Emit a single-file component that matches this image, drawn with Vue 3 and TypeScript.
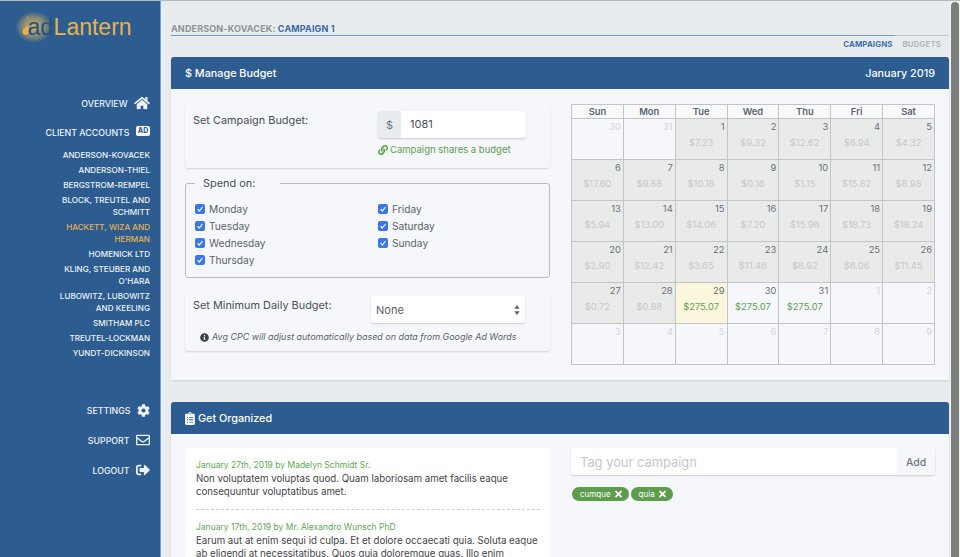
<script setup lang="ts">
const accounts = [
  { name: 'ANDERSON-KOVACEK' },
  { name: 'ANDERSON-THIEL' },
  { name: 'BERGSTROM-REMPEL' },
  { name: 'BLOCK, TREUTEL AND SCHMITT' },
  { name: 'HACKETT, WIZA AND HERMAN', active: true },
  { name: 'HOMENICK LTD' },
  { name: 'KLING, STEUBER AND O\'HARA' },
  { name: 'LUBOWITZ, LUBOWITZ AND KEELING' },
  { name: 'SMITHAM PLC' },
  { name: 'TREUTEL-LOCKMAN' },
  { name: 'YUNDT-DICKINSON' },
]
const weekdays = ['Sun', 'Mon', 'Tue', 'Wed', 'Thu', 'Fri', 'Sat']
interface Day { d: number; amt?: string; kind: 'off' | 'past' | 'today' | 'future' }
const past = (d: number, amt: string): Day => ({ d, amt: '$' + amt, kind: 'past' })
const off = (d: number): Day => ({ d, kind: 'off' })
const fut = (d: number, kind: 'today' | 'future'): Day => ({ d, amt: '$275.07', kind })
const weeks: Day[][] = [
  [off(30), off(31), past(1, '7.23'), past(2, '9.32'), past(3, '12.62'), past(4, '6.94'), past(5, '4.32')],
  [past(6, '17.60'), past(7, '9.88'), past(8, '10.18'), past(9, '0.16'), past(10, '1.15'), past(11, '15.82'), past(12, '8.98')],
  [past(13, '5.94'), past(14, '13.00'), past(15, '14.06'), past(16, '7.20'), past(17, '15.96'), past(18, '18.73'), past(19, '18.24')],
  [past(20, '2.90'), past(21, '12.42'), past(22, '3.65'), past(23, '11.46'), past(24, '8.92'), past(25, '6.06'), past(26, '11.45')],
  [past(27, '0.72'), past(28, '0.88'), fut(29, 'today'), fut(30, 'future'), fut(31, 'future'), off(1), off(2)],
  [off(3), off(4), off(5), off(6), off(7), off(8), off(9)],
]
const daysA = ['Monday', 'Tuesday', 'Wednesday', 'Thursday']
const daysB = ['Friday', 'Saturday', 'Sunday']
const tags = ['cumque', 'quia']
const timesPath = 'M242.72 256l100.07-100.07c12.28-12.28 12.28-32.19 0-44.48l-22.24-22.24c-12.28-12.28-32.19-12.28-44.48 0L176 189.28 75.93 89.21c-12.28-12.28-32.19-12.28-44.48 0L9.21 111.45c-12.28 12.28-12.28 32.19 0 44.48L109.28 256 9.21 356.07c-12.28 12.28-12.28 32.19 0 44.48l22.24 22.24c12.28 12.28 32.2 12.28 44.48 0L176 322.72l100.07 100.07c12.28 12.28 32.2 12.28 44.48 0l22.24-22.24c12.28-12.28 12.28-32.19 0-44.48L242.72 256z'
</script>

<template>
  <div class="app">
    <aside class="sidebar">
      <div class="logo">
        <span class="glow"></span>
        <svg class="flame" viewBox="0 0 8 20" width="8" height="20"><path d="M5.2 0h1v3h-1z" fill="#e3ac48" opacity=".7"/><path d="M5 9c.6 2 2 3 2 5.6C7 17.500 5.400 19 3.800 19 2 19 .6 17.600.6 15.400.6 12.800 3.800 11.500 5 9z" fill="#eeb045"/></svg>
        <span class="logo-ad">ad</span><span class="logo-lantern">Lantern</span>
      </div>
      <a class="nav overview">OVERVIEW
        <svg viewBox="0 0 576 512" width="16" height="14"><path fill="currentColor" d="M280.37 148.26L96 300.11V464a16 16 0 0 0 16 16l112.06-.29a16 16 0 0 0 15.92-16V368a16 16 0 0 1 16-16h64a16 16 0 0 1 16 16v95.64a16 16 0 0 0 16 16.05L464 480a16 16 0 0 0 16-16V300L295.67 148.26a12.19 12.19 0 0 0-15.3 0zM571.6 251.47L488 182.56V44.05a12 12 0 0 0-12-12h-56a12 12 0 0 0-12 12v72.61L318.47 43a48 48 0 0 0-61 0L4.34 251.47a12 12 0 0 0-1.6 16.9l25.5 31A12 12 0 0 0 45.15 301l235.22-193.74a12.19 12.19 0 0 1 15.3 0L530.9 301a12 12 0 0 0 16.9-1.6l25.5-31a12 12 0 0 0-1.7-16.93z"/></svg>
      </a>
      <a class="nav clients">CLIENT ACCOUNTS <span class="ad-badge">AD</span></a>
      <ul class="accounts">
        <li v-for="a in accounts" :key="a.name" :class="{ active: a.active }">{{ a.name }}</li>
      </ul>
      <a class="nav settings">SETTINGS
        <svg viewBox="0 0 512 512" width="13" height="13"><path fill="currentColor" d="M487.4 315.7l-42.6-24.6c4.3-23.2 4.3-47 0-70.2l42.6-24.6c4.9-2.8 7.1-8.6 5.5-14-11.1-35.6-30-67.8-54.7-94.6-3.8-4.1-10-5.1-14.8-2.3L380.8 110c-17.9-15.4-38.5-27.3-60.8-35.1V25.8c0-5.6-3.9-10.5-9.4-11.7-36.7-8.2-74.3-7.8-109.2 0-5.5 1.2-9.4 6.1-9.4 11.7V75c-22.2 7.9-42.8 19.8-60.8 35.1L88.7 85.5c-4.9-2.8-11-1.9-14.8 2.3-24.7 26.7-43.6 58.9-54.7 94.6-1.7 5.4.6 11.2 5.5 14L67.3 221c-4.3 23.2-4.3 47 0 70.2l-42.6 24.6c-4.9 2.8-7.1 8.6-5.5 14 11.1 35.6 30 67.8 54.7 94.6 3.8 4.1 10 5.1 14.8 2.3l42.6-24.6c17.9 15.4 38.5 27.3 60.8 35.1v49.2c0 5.6 3.9 10.5 9.4 11.7 36.7 8.2 74.3 7.8 109.2 0 5.5-1.2 9.4-6.1 9.4-11.7v-49.2c22.2-7.9 42.8-19.8 60.8-35.1l42.6 24.6c4.9 2.8 11 1.9 14.8-2.3 24.7-26.7 43.6-58.9 54.7-94.6 1.5-5.5-.7-11.3-5.6-14.1zM256 336c-44.1 0-80-35.9-80-80s35.9-80 80-80 80 35.9 80 80-35.9 80-80 80z"/></svg>
      </a>
      <a class="nav support">SUPPORT
        <svg viewBox="0 0 512 512" width="14" height="14"><path fill="currentColor" d="M464 64H48C21.49 64 0 85.49 0 112v288c0 26.51 21.49 48 48 48h416c26.51 0 48-21.49 48-48V112c0-26.51-21.49-48-48-48zm0 48v40.805c-22.422 18.259-58.168 46.651-134.587 106.49-16.841 13.247-50.201 45.072-73.413 44.701-23.208.375-56.579-31.459-73.413-44.701C106.18 199.465 70.425 171.067 48 152.805V112h416zM48 400V214.398c22.914 18.251 55.409 43.862 104.938 82.646 21.857 17.205 60.134 55.186 103.062 54.955 42.717.231 80.509-37.199 103.053-54.947 49.528-38.783 82.032-64.401 104.947-82.653V400H48z"/></svg>
      </a>
      <a class="nav logout">LOGOUT
        <svg viewBox="0 0 512 512" width="14" height="14"><path fill="currentColor" d="M497 273L329 441c-15 15-41 4.500-41-17v-96H152c-13.300 0-24-10.700-24-24v-96c0-13.300 10.700-24 24-24h136V88c0-21.400 25.900-32 41-17l168 168c9.300 9.400 9.300 24.600 0 34zM192 436v-40c0-6.600-5.400-12-12-12H96c-17.700 0-32-14.300-32-32V160c0-17.700 14.300-32 32-32h84c6.600 0 12-5.400 12-12V76c0-6.600-5.400-12-12-12H96c-53 0-96 43-96 96v192c0 53 43 96 96 96h84c6.600 0 12-5.400 12-12z"/></svg>
      </a>
    </aside>

    <main class="main">
      <div class="crumbs"><span class="crumb-client">ANDERSON-KOVACEK:</span> <span class="crumb-camp">CAMPAIGN 1</span></div>
      <div class="rule"><span class="rule-fill"></span></div>
      <div class="tabs"><span class="tab on">CAMPAIGNS</span><span class="tab">BUDGETS</span></div>

      <section class="card budget-card">
        <header class="card-head"><span>$ Manage Budget</span><span>January 2019</span></header>
        <div class="card-body budget-body">
          <div class="col-left">
            <div class="panel panel-budget">
              <div class="label">Set Campaign Budget:</div>
              <div class="budget-field">
                <div class="input-group">
                  <span class="addon">$</span>
                  <span class="input-val">1081</span>
                </div>
                <div class="shares">
                  <svg viewBox="0 0 512 512" width="10" height="10"><path fill="currentColor" d="M326.612 185.391c59.747 59.809 58.927 155.698.36 214.59-.11.12-.24.25-.36.37l-67.2 67.2c-59.27 59.27-155.699 59.262-214.96 0-59.27-59.26-59.27-155.7 0-214.96l37.106-37.106c9.84-9.84 26.786-3.3 27.294 10.606.648 17.722 3.826 35.527 9.69 52.721 1.986 5.822.567 12.262-3.783 16.612l-13.087 13.087c-28.026 28.026-28.905 73.66-1.155 101.96 28.024 28.579 74.086 28.749 102.325.51l67.2-67.19c28.191-28.191 28.073-73.757 0-101.83-3.701-3.694-7.429-6.564-10.341-8.569a16.037 16.037 0 0 1-6.947-12.606c-.396-10.567 3.348-21.456 11.698-29.806l21.054-21.055c5.521-5.521 14.182-6.199 20.584-1.731a152.482 152.482 0 0 1 20.522 17.197zM467.547 44.449c-59.261-59.262-155.69-59.27-214.96 0l-67.2 67.2c-.12.12-.25.25-.36.37-58.566 58.892-59.387 154.781.36 214.59a152.454 152.454 0 0 0 20.521 17.196c6.402 4.468 15.064 3.789 20.584-1.731l21.054-21.055c8.35-8.35 12.094-19.239 11.698-29.806a16.037 16.037 0 0 0-6.947-12.606c-2.912-2.005-6.64-4.875-10.341-8.569-28.073-28.073-28.191-73.639 0-101.83l67.2-67.19c28.239-28.239 74.3-28.069 102.325.51 27.75 28.3 26.872 73.934-1.155 101.96l-13.087 13.087c-4.35 4.35-5.769 10.79-3.783 16.612 5.864 17.194 9.042 34.999 9.69 52.721.509 13.906 17.454 20.446 27.294 10.606l37.106-37.106c59.271-59.259 59.271-155.699.001-214.959z"/></svg>
                  Campaign shares a budget
                </div>
              </div>
            </div>

            <fieldset class="spend">
              <legend>Spend on:</legend>
              <div class="spend-cols">
                <div class="spend-col">
                  <div class="check" v-for="d in daysA" :key="d"><span class="box"><svg viewBox="0 0 10 10" width="10" height="10"><path d="M2.600 5.200l1.700 1.800 3.200-4" fill="none" stroke="#fff" stroke-width="1.200"/></svg></span>{{ d }}</div>
                </div>
                <div class="spend-col wide">
                  <div class="check" v-for="d in daysB" :key="d"><span class="box"><svg viewBox="0 0 10 10" width="10" height="10"><path d="M2.600 5.200l1.700 1.800 3.200-4" fill="none" stroke="#fff" stroke-width="1.200"/></svg></span>{{ d }}</div>
                </div>
              </div>
            </fieldset>

            <div class="panel panel-min">
              <div class="min-row">
                <div class="label">Set Minimum Daily Budget:</div>
                <div class="select">None
                  <svg viewBox="0 0 6 10" width="6" height="10"><path d="M3 0l2.600 3.800H.4zM3 10L.4 6.200h5.200z" fill="#55606c"/></svg>
                </div>
              </div>
              <div class="note">
                <svg viewBox="0 0 512 512" width="9" height="9"><path fill="#3b4149" d="M256 8C119.043 8 8 119.083 8 256c0 136.997 111.043 248 248 248s248-111.003 248-248C504 119.083 392.957 8 256 8zm0 110c23.196 0 42 18.804 42 42s-18.804 42-42 42-42-18.804-42-42 18.804-42 42-42zm56 254c0 6.627-5.373 12-12 12h-88c-6.627 0-12-5.373-12-12v-24c0-6.627 5.373-12 12-12h12v-64h-12c-6.627 0-12-5.373-12-12v-24c0-6.627 5.373-12 12-12h64c6.627 0 12 5.373 12 12v100h12c6.627 0 12 5.373 12 12v24z"/></svg>
                <em>Avg CPC will adjust automatically based on data from Google Ad Words</em>
              </div>
            </div>
          </div>

          <table class="cal">
            <thead><tr><th v-for="w in weekdays" :key="w">{{ w }}</th></tr></thead>
            <tbody>
              <tr v-for="(week, i) in weeks" :key="i">
                <td v-for="day in week" :key="day.d" :class="day.kind">
                  <div class="num">{{ day.d }}</div>
                  <div class="amt" v-if="day.amt">{{ day.amt }}</div>
                </td>
              </tr>
            </tbody>
          </table>
        </div>
      </section>

      <section class="card org-card">
        <header class="card-head">
          <span class="with-icon">
            <svg viewBox="0 0 384 512" width="10" height="13"><path fill="currentColor" d="M336 64h-80c0-35.300-28.700-64-64-64s-64 28.700-64 64H48C21.500 64 0 85.500 0 112v352c0 26.500 21.500 48 48 48h288c26.500 0 48-21.500 48-48V112c0-26.500-21.500-48-48-48zM96 424c-13.300 0-24-10.700-24-24s10.700-24 24-24 24 10.700 24 24-10.700 24-24 24zm0-96c-13.300 0-24-10.700-24-24s10.700-24 24-24 24 10.700 24 24-10.700 24-24 24zm0-96c-13.300 0-24-10.700-24-24s10.700-24 24-24 24 10.700 24 24-10.700 24-24 24zm96-192c13.300 0 24 10.700 24 24s-10.700 24-24 24-24-10.700-24-24 10.700-24 24-24zm128 368c0 4.400-3.600 8-8 8H168c-4.400 0-8-3.600-8-8v-16c0-4.400 3.600-8 8-8h144c4.400 0 8 3.600 8 8v16zm0-96c0 4.400-3.600 8-8 8H168c-4.400 0-8-3.600-8-8v-16c0-4.400 3.600-8 8-8h144c4.400 0 8 3.600 8 8v16zm0-96c0 4.400-3.600 8-8 8H168c-4.400 0-8-3.600-8-8v-16c0-4.400 3.600-8 8-8h144c4.400 0 8 3.600 8 8v16z"/></svg>
            Get Organized
          </span>
        </header>
        <div class="card-body org-body">
          <div class="notes">
            <div class="note-item">
              <div class="note-date">January 27th, 2019 by Madelyn Schmidt Sr.</div>
              <p>Non voluptatem voluptas quod. Quam laboriosam amet facilis eaque consequuntur voluptatibus amet.</p>
            </div>
            <div class="note-item second">
              <div class="note-date">January 17th, 2019 by Mr. Alexandro Wunsch PhD</div>
              <p>Earum aut at enim sequi id culpa. Et et dolore occaecati quia. Soluta eaque ab eligendi at necessitatibus. Quos quia doloremque quas. Illo enim</p>
            </div>
          </div>
          <div class="tagging">
            <div class="tag-input"><span class="ph">Tag your campaign</span><span class="add">Add</span></div>
            <div class="tags">
              <span class="tag" v-for="t in tags" :key="t">{{ t }}
                <svg viewBox="0 0 352 512" width="7" height="10"><path fill="#fff" :d="timesPath"/></svg>
              </span>
            </div>
          </div>
        </div>
      </section>
    </main>

    <div class="scrollbar"><div class="thumb"></div></div>
  </div>
</template>

<style>
html, body { margin: 0; height: 557px; overflow: hidden; }
</style>

<style scoped>
.app {
  display: flex;
  height: 557px;
  box-sizing: border-box;
  border-top: 1px solid #b9b9bb;
  overflow: hidden;
  font-family: Inter, "Liberation Sans", sans-serif;
  background: #e9ecef;
  color: #495057;
}
.sidebar {
  width: 160px;
  flex: none;
  background: #2c5c90;
  color: #eef2f7;
  display: flex;
  flex-direction: column;
  align-items: flex-end;
  padding-right: 10px;
  box-sizing: border-box;
  position: relative;
}
.logo {
  position: absolute;
  left: 22px;
  top: 11px;
  height: 30px;
  display: flex;
  align-items: center;
  font-family: "Liberation Sans", sans-serif;
  font-size: 23px;
}
.glow {
  position: absolute;
  left: -7px;
  top: -1px;
  width: 42px;
  height: 32px;
  background: radial-gradient(ellipse closest-side at 45% 50%, rgba(240, 190, 90, .85) 0%, rgba(240, 190, 90, .5) 55%, rgba(240, 190, 90, 0) 100%);
}
.flame { position: relative; margin-right: -2.5px; margin-top: -2px; }
.logo-ad { position: relative; color: #24527f; }
.logo-lantern { position: relative; color: #e8b24c; margin-left: .5px; }
.nav {
  display: flex;
  align-items: center;
  gap: 6.5px;
  font-size: 8.8px;
  font-weight: 500;
  line-height: 14px;
}
.nav svg, .ad-badge { transform: translateY(-1px); }
.overview { margin-top: 96px; }
.clients { margin-top: 15px; }
.settings { margin-top: 45px; }
.support { margin-top: 16px; }
.logout { margin-top: 16px; }
.ad-badge {
  width: 14px;
  height: 10px;
  background: #fff;
  border-radius: 2px;
  color: #2c5c90;
  font-size: 7px;
  font-weight: 800;
  line-height: 10px;
  text-align: center;
  margin-bottom: 2px;
}
.accounts {
  list-style: none;
  margin: 9px 0 0;
  padding: 0;
  width: 100px;
  text-align: right;
  display: flex;
  flex-direction: column;
  gap: 3px;
  font-size: 8.1px;
  font-weight: 500;
  line-height: 12px;
}
.accounts .active { color: #e4b254; }
.main {
  flex: 1;
  min-width: 0;
  box-sizing: border-box;
  border-left: 1px solid #7f9fc6;
  padding: 21px 1px 0 10px;
}
.crumbs {
  font-size: 9px;
  font-weight: 700;
  line-height: 13px;
  height: 13px;
  letter-spacing: .15px;
}
.crumb-client { color: #8d9298; }
.crumb-camp { color: #3a6ba3; }
.rule {
  height: 1px;
  background: #c3c8cf;
}
.rule-fill { display: block; width: 724px; height: 1px; background: #7b9cc4; }
.tabs {
  display: flex;
  justify-content: flex-end;
  gap: 10px;
  padding: 3px 8px 0 0;
  height: 16px;
  box-sizing: border-box;
  font-size: 7.8px;
  font-weight: 700;
  line-height: 10px;
  color: #b1b4b9;
  letter-spacing: .15px;
  margin-bottom: 5px;
}
.tab.on { color: #3f6fa6; }
.card { box-shadow: 0 1px 2px rgba(0, 0, 0, .12); border-radius: 3px; }
.card-head {
  height: 32px;
  background: #2c5c90;
  color: #fff;
  border-radius: 3px 3px 0 0;
  display: flex;
  align-items: center;
  justify-content: space-between;
  padding: 0 14px;
  font-size: 10.8px;
  font-weight: 500;
}
.with-icon { display: inline-flex; align-items: center; gap: 3px; }
.card-body { background: #f5f7fa; }
.budget-body {
  height: 291px;
  box-sizing: border-box;
  padding: 15px 14px 0;
  display: flex;
  justify-content: space-between;
}
.col-left { width: 365px; }
.panel {
  border-radius: 3px;
  box-shadow: 0 1px 2px rgba(0, 0, 0, .14);
  background: #f5f7fa;
}
.panel-budget {
  height: 64px;
  box-sizing: border-box;
  padding: 7px 8px 0;
  display: flex;
  justify-content: space-between;
}
.label { font-size: 10.9px; line-height: 16px; padding-top: 1px; color: #495057; }
.budget-field { width: 148px; margin-right: 16px; }
.input-group {
  height: 27px;
  display: flex;
  background: #fff;
  border-radius: 3px;
  box-shadow: 0 1px 2px rgba(0, 0, 0, .18);
  overflow: hidden;
  align-items: stretch;
  font-size: 11px;
}
.addon {
  width: 23px;
  background: #e9ecef;
  display: flex;
  align-items: center;
  justify-content: center;
  color: #6c757d;
}
.input-val { padding-left: 9px; line-height: 27px; color: #495057; }
.shares {
  margin-top: 6px;
  display: flex;
  align-items: center;
  gap: 2px;
  font-size: 9.5px;
  line-height: 12px;
  color: #58a14a;
  white-space: nowrap;
}
.spend {
  margin: 8px 0 0;
  padding: 0;
  height: 102px;
  min-width: 0;
  box-sizing: border-box;
  border: 1px solid #b8bcc2;
  border-radius: 3px;
  position: relative;
}
.spend legend {
  margin-left: 9px;
  padding: 0 25px 0 8px;
  font-size: 10.9px;
  line-height: 14px;
  color: #495057;
  height: 14px;
}
.spend-cols { display: flex; padding: 10px 0 0 9px; }
.spend-col { width: 183px; flex: none; }
.spend-col.wide { width: auto; flex: 1; }
.check {
  display: flex;
  align-items: center;
  gap: 4px;
  height: 17px;
  font-size: 10.2px;
  color: #5b636b;
}
.box {
  width: 10px;
  height: 10px;
  background: #3a78e8;
  border-radius: 2px;
  display: flex;
}
.panel-min {
  margin-top: 14px;
  height: 59px;
  box-sizing: border-box;
  padding: 4px 8px 0;
}
.min-row { display: flex; justify-content: space-between; }
.select {
  width: 154px;
  height: 27px;
  background: #fff;
  border-radius: 3px;
  box-shadow: 0 1px 2px rgba(0, 0, 0, .18);
  margin-right: 17px;
  box-sizing: border-box;
  padding: 0 5px;
  display: flex;
  align-items: center;
  justify-content: space-between;
  font-size: 11px;
  color: #5b636b;
}
.note {
  margin-top: 8px;
  padding-left: 7px;
  display: flex;
  align-items: center;
  gap: 3px;
  font-size: 8.95px;
  line-height: 12px;
  color: #5b636b;
  white-space: nowrap;
}
.cal {
  width: 364px;
  height: 260px;
  table-layout: fixed;
  border-collapse: collapse;
  font-size: 9.4px;
  align-self: flex-start;
}
.cal th {
  height: 13px;
  padding: 0;
  border: 1px solid #c3c4c6;
  background: #f8f9fb;
  font-size: 9.4px;
  font-weight: 600;
  color: #5d636a;
  line-height: 13px;
}
.cal td {
  height: 40px;
  padding: 0 2px 0 0;
  border: 1px solid #c3c4c6;
  vertical-align: top;
  text-align: right;
}
.num { font-size: 9.4px; line-height: 12px; padding-top: 2px; color: #6a6f75; }
.amt { text-align: center; font-size: 9.4px; line-height: 12px; margin-top: 4px; padding-left: 2px; color: #c5c7c8; }
.cal .past { background: #e9ebeb; }
.cal .off { background: #f6f7fa; }
.cal .off .num { color: #d3d5d8; }
.cal .today { background: #fbf6de; }
.cal .today .amt, .cal .future .amt { color: #5fa04e; }
.cal .future { background: #f6f7fa; }
.org-card { margin-top: 22px; }
.org-body {
  height: 200px;
  box-sizing: border-box;
  padding: 14px 14px 0 15px;
  display: flex;
  justify-content: space-between;
  overflow: hidden;
}
.notes {
  width: 364px;
  background: #fff;
  border-radius: 3px 3px 0 0;
  padding: 11px 10px 0;
  box-sizing: border-box;
  height: 200px;
}
.note-item { padding-bottom: 11px; border-bottom: 1px dashed #cfd2d5; }
.note-item.second { border: 0; padding-top: 11px; }
.note-date { font-size: 8.5px; line-height: 13px; color: #5fa652; white-space: nowrap; }
.note-item p { margin: 0; font-size: 9.7px; line-height: 13px; color: #3f4448; }
.tagging { width: 364px; }
.tag-input {
  height: 27px;
  display: flex;
  background: #fff;
  border-radius: 3px;
  box-shadow: 0 1px 2px rgba(0, 0, 0, .18);
  overflow: hidden;
  font-size: 12.9px;
  line-height: 29px;
}
.ph { flex: 1; padding-left: 9px; color: #c4c8cd; }
.add { width: 38px; text-align: center; background: #f5f7fa; color: #6e7780; font-weight: 500; font-size: 10.4px; }
.tags { display: flex; gap: 2px; margin-top: 12px; padding-left: 1px; }
.tag {
  height: 14px;
  border-radius: 7px;
  background: #5e9c4d;
  color: #fff;
  font-size: 8px;
  font-weight: 400;
  line-height: 14px;
  padding: 0 7px 0 8px;
  display: inline-flex;
  align-items: center;
  gap: 4px;
}
.scrollbar { width: 10px; flex: none; background: #f3f3f3; padding: 1px 0 0 1px; box-sizing: border-box; }
.thumb { width: 8px; height: 100%; background: #7d7f7d; border-radius: 4px 4px 0 0; }
</style>
